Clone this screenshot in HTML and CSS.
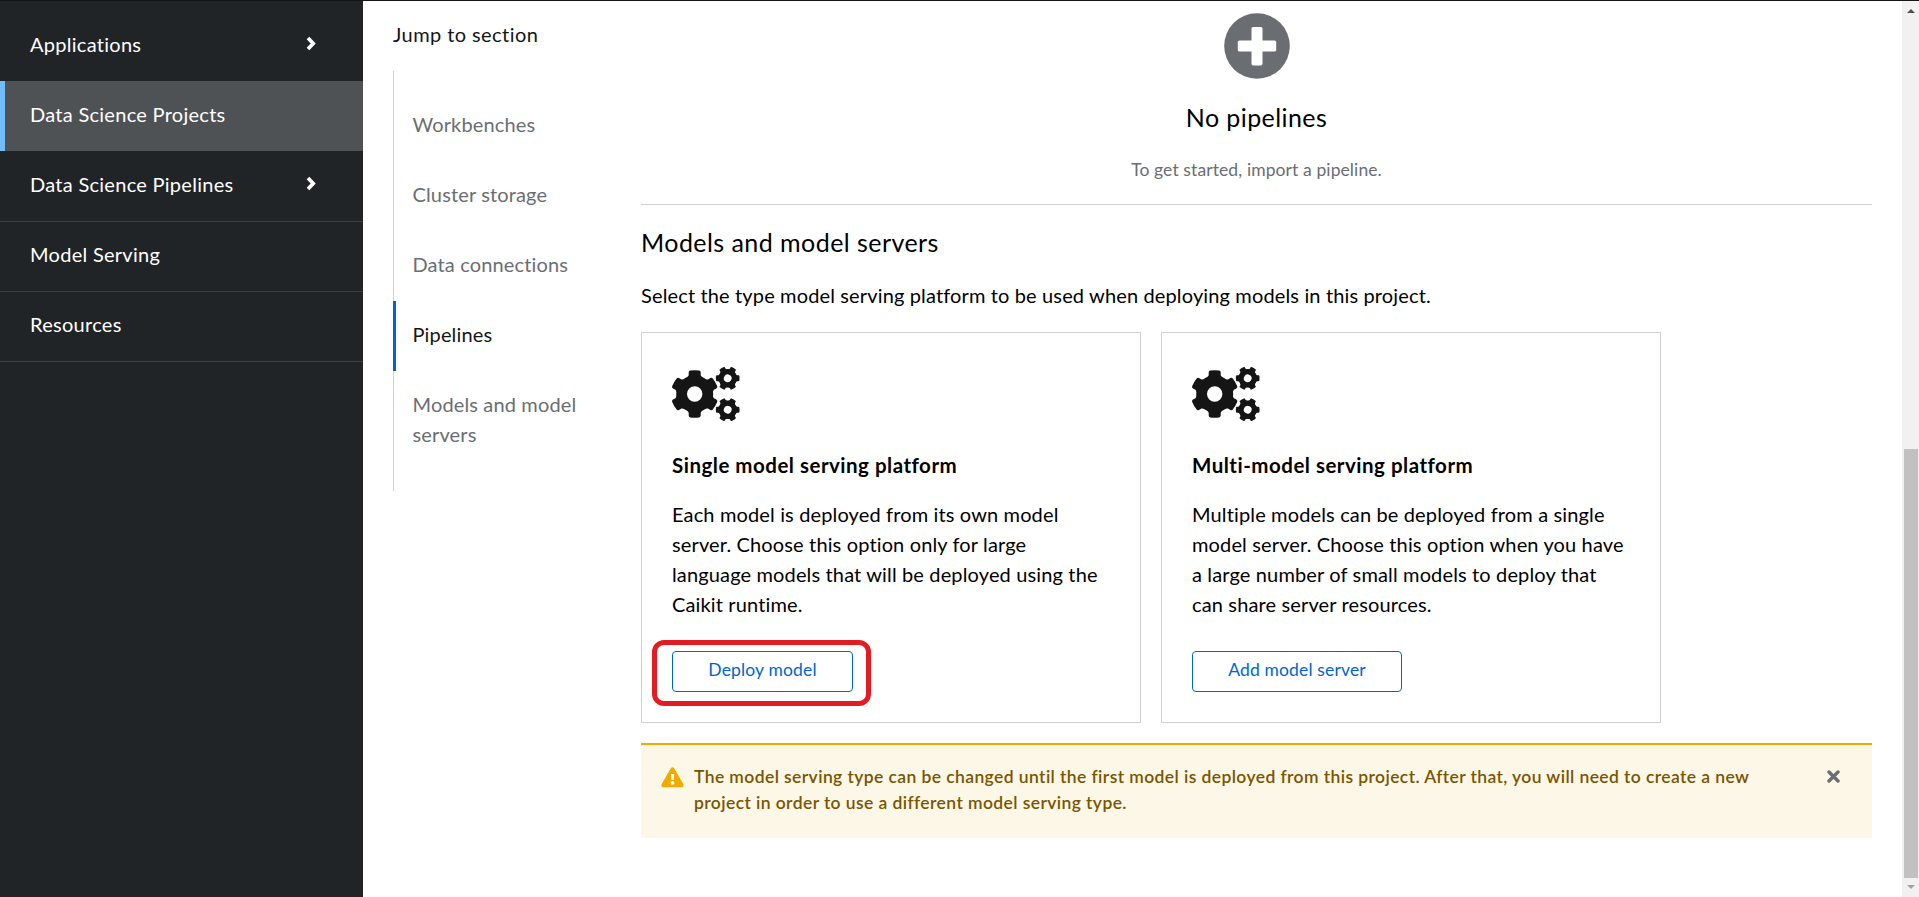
FILE: index.html
```html
<!DOCTYPE html>
<html lang="en">
<head>
<meta charset="utf-8">
<title>Data Science Projects</title>
<link rel="stylesheet" href="styles.css">
</head>
<body>
<svg class="defs" width="0" height="0" aria-hidden="true">
  <defs>
    <g id="cog">
      <circle r="13.1" fill="none" stroke="currentColor" stroke-width="10.8"/>
      <g id="teeth">
        <path id="tooth" fill="currentColor" d="M-9-14 L-6-18.700 V-21.600 Q-6-23.200-4.400-23.400 Q0-24 4.400-23.400 Q6-23.200 6-21.600 V-18.700 L9-14Z"/>
        <use href="#tooth" transform="rotate(60)"/>
        <use href="#tooth" transform="rotate(120)"/>
        <use href="#tooth" transform="rotate(180)"/>
        <use href="#tooth" transform="rotate(240)"/>
        <use href="#tooth" transform="rotate(300)"/>
      </g>
    </g>
    <g id="cogs">
      <use href="#cog" transform="translate(22.700 27)"/>
      <use href="#cog" transform="translate(55.700 11.300) rotate(30) scale(.5)"/>
      <use href="#cog" transform="translate(55.700 42.700) rotate(30) scale(.5)"/>
    </g>
  </defs>
</svg>
<div class="app">
  <nav class="sidebar">
    <a class="nav-item"><span class="nav-label">Applications</span>
      <svg class="chevron" width="10" height="15" viewBox="0 0 10 15"><path d="M2 2l5.200 5.500L2 13" fill="none" stroke="currentColor" stroke-width="3.700"/></svg></a>
    <a class="nav-item nav-item-current"><span class="nav-label">Data Science Projects</span></a>
    <a class="nav-item"><span class="nav-label">Data Science Pipelines</span>
      <svg class="chevron" width="10" height="15" viewBox="0 0 10 15"><path d="M2 2l5.200 5.500L2 13" fill="none" stroke="currentColor" stroke-width="3.700"/></svg></a>
    <a class="nav-item"><span class="nav-label">Model Serving</span></a>
    <a class="nav-item"><span class="nav-label">Resources</span></a>
  </nav>
  <aside class="jump">
    <div class="jump-title">Jump to section</div>
    <div class="jump-list">
      <a class="jump-item">Workbenches</a>
      <a class="jump-item">Cluster storage</a>
      <a class="jump-item">Data connections</a>
      <a class="jump-item jump-item-current">Pipelines</a>
      <a class="jump-item">Models and model<br>servers</a>
    </div>
  </aside>
  <main class="main">
    <section class="empty">
      <svg class="plus" width="66" height="66" viewBox="0 0 66 66"><circle cx="33" cy="33" r="32.800" fill="#6a6e73"/><rect x="27.500" y="14" width="11" height="38.400" rx="1.600" fill="#fff"/><rect x="13.800" y="27.600" width="38.400" height="11" rx="1.600" fill="#fff"/></svg>
      <h2 class="empty-title">No pipelines</h2>
      <p class="empty-text">To get started, import a pipeline.</p>
    </section>
    <section class="models">
      <h2 class="models-title">Models and model servers</h2>
      <p class="models-text">Select the type model serving platform to be used when deploying models in this project.</p>
      <div class="cards">
        <article class="card">
          <svg class="cogs" width="69" height="55" viewBox="0 0 69 55"><use href="#cogs"/></svg>
          <h3 class="card-title">Single model serving platform</h3>
          <p class="card-text">Each model is deployed from its own model<br>server. Choose this option only for large<br>language models that will be deployed using the<br>Caikit runtime.</p>
          <div class="action"><button class="button button-deploy">Deploy model</button><span class="highlight"></span></div>
        </article>
        <article class="card">
          <svg class="cogs" width="69" height="55" viewBox="0 0 69 55"><use href="#cogs"/></svg>
          <h3 class="card-title">Multi-model serving platform</h3>
          <p class="card-text">Multiple models can be deployed from a single<br>model server. Choose this option when you have<br>a large number of small models to deploy that<br>can share server resources.</p>
          <div class="action"><button class="button button-add">Add model server</button></div>
        </article>
      </div>
      <div class="alert">
        <svg class="alert-icon" width="23" height="21" viewBox="0 0 23 21"><path d="M11.500.3c.8 0 1.400.4 1.800 1.100l9 15.700c.8 1.500-.2 3.200-1.800 3.200H2.500C.9 20.300-.1 18.600.7 17.100l9-15.700C10.100.7 10.700.3 11.500.3z" fill="#f0ab00"/><path d="M9.900 7h3.200l-.4 6h-2.400z" fill="#fff"/><circle cx="11.500" cy="15.900" r="1.900" fill="#fff"/></svg>
        <p class="alert-text">The model serving type can be changed until the first model is deployed from this project. After that, you will need to create a new<br>project in order to use a different model serving type.</p>
        <svg class="close" width="13" height="13" viewBox="0 0 13 13"><path d="M2 2l9 9M11 2l-9 9" stroke="#6a6e73" stroke-width="3.400" stroke-linecap="round"/></svg>
      </div>
    </section>
  </main>
  <div class="scrollbar">
    <svg width="8" height="4" viewBox="0 0 8 4"><path d="M4 0l4 4H0z" fill="#505050"/></svg>
    <span class="thumb"></span>
    <svg width="8" height="4" viewBox="0 0 8 4"><path d="M0 0h8L4 4z" fill="#a3a3a3"/></svg>
  </div>
</div>
</body>
</html>
```
FILE: styles.css
```css
* { box-sizing: border-box; }
body { margin: 0; background: #fff; color: #151515; font: 20px/30px Lato, "Open Sans", sans-serif; letter-spacing: 0.14px; }
h2, h3, p { margin: 0; font-weight: 400; }
svg { display: block; flex: none; }
.defs { position: absolute; }
.app { display: flex; width: 1919px; height: 897px; overflow: hidden; border-top: 1px solid #151515; white-space: nowrap; }

.sidebar { width: 363px; background: #212427; color: #fff; padding-top: 10px; flex: none; letter-spacing: 0.28px; }
.nav-item { display: flex; align-items: center; justify-content: space-between; height: 70px; padding: 0 47px 0 30px; box-shadow: 0 1px 0 #3c3f42; }
.nav-item:first-child { box-shadow: none; }
.nav-item-current { background: #4f5255; border-left: 5px solid #73bcf7; padding-left: 25px; box-shadow: none; }
.nav-label { padding-bottom: 4px; }
.chevron { margin-top: -5px; }

.jump { width: 278px; padding: 18px 0 0 30px; flex: none; }
.jump-title { height: 52px; letter-spacing: 0.42px; }
.jump-list { border-left: 1px solid #d2d2d2; padding: 20px 0; }
.jump-item { display: block; padding: 18px 0 22px 18.5px; color: #6a6e73; }
.jump-item-current { color: #151515; border-left: 3px solid #06c; margin-left: -1px; padding-left: 16.5px; }

.main { width: 1231px; flex: none; color: #000; }
.empty { height: 204px; border-bottom: 1px solid #d2d2d2; display: flex; flex-direction: column; align-items: center; padding-top: 12px; }
.empty-title { font-size: 25px; line-height: 32px; margin-top: 22px; letter-spacing: 0.42px; }
.empty-text { font-size: 17.5px; line-height: 26px; margin-top: 24px; color: #6a6e73; letter-spacing: 0.1px; }
.models-title { font-size: 25px; line-height: 32px; margin-top: 21px; letter-spacing: 0.45px; }
.models-text { margin-top: 22px; }
.cards { display: flex; gap: 20px; margin-top: 22px; }
.card { width: 500px; height: 391px; border: 1px solid #d2d2d2; padding: 34px 30px 0; color: #151515; }
.card-title { color: #000; font-size: 20.5px; font-weight: 700; margin-top: 28px; letter-spacing: 0.5px; }
.card-text { color: #000; margin-top: 19px; }
.action { position: relative; margin-top: 32px; }
.button { display: block; height: 41px; border: 1px solid #06c; border-radius: 4px; background: #fff; color: #06c; font: 17.5px/26px Lato, "Open Sans", sans-serif; padding: 0 0 4px; text-align: center; letter-spacing: 0.15px; }
.button-deploy { width: 181px; }
.button-add { width: 210px; }
.highlight { position: absolute; left: -20.5px; top: -11.5px; width: 219px; height: 66.5px; border: 5px solid #e31b23; border-radius: 12px; }
.alert { display: flex; margin-top: 20px; height: 95px; border-top: 2px solid #f0ab00; background: #fdf7e7; padding: 19px 32px 0 20px; }
.alert-icon { margin-top: 3px; }
.alert-text { margin-left: 10px; flex: 1; font-size: 17.5px; line-height: 26.25px; font-weight: 600; color: #795600; letter-spacing: 0.4px; }
.close { margin-top: 6px; }

.scrollbar { width: 17px; margin-left: auto; background: #f1f1f1; display: flex; flex-direction: column; align-items: center; padding: 8px 0 8px; }
.thumb { width: 14px; height: 429px; background: #c1c1c1; margin: auto 0 7px; }
```
